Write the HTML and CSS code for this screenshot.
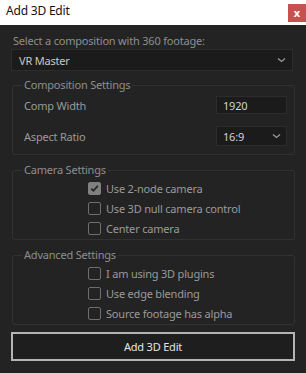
FILE: index.html
```html
<!DOCTYPE html>
<html lang="en">
<head>
    <meta charset="UTF-8">
    <title>Add 3D Edit</title>
    <link rel="stylesheet" href="styles.css">
</head>
<body>
    <div class="titlebar">
        <span class="title">Add 3D Edit</span>
        <button class="close">x</button>
    </div>
    <main class="dialog">
        <p class="prompt">Select a composition with 360 footage:</p>
        <div class="select wide">
            <span>VR Master</span>
            <svg class="chevron" width="9" height="6" viewBox="0 0 9 6"><path d="M1 1.5 L4.5 4.5 L8 1.5" fill="none" stroke="#9a9a9a" stroke-width="1.3"/></svg>
        </div>

        <fieldset class="group">
            <legend>Composition Settings</legend>
            <div class="field first">
                <span>Comp Width</span>
                <div class="input">1920</div>
            </div>
            <div class="field">
                <span>Aspect Ratio</span>
                <div class="select small">
                    <span>16:9</span>
                    <svg class="chevron" width="9" height="6" viewBox="0 0 9 6"><path d="M1 1.5 L4.5 4.5 L8 1.5" fill="none" stroke="#9a9a9a" stroke-width="1.3"/></svg>
                </div>
            </div>
        </fieldset>

        <fieldset class="group checks">
            <legend>Camera Settings</legend>
            <label class="check"><span class="box on"><svg width="11" height="11" viewBox="0 0 11 11"><path d="M2.2 5.6 L4.4 7.8 L8.8 2.8" fill="none" stroke="#262626" stroke-width="1.8"/></svg></span>Use 2-node camera</label>
            <label class="check"><span class="box"></span>Use 3D null camera control</label>
            <label class="check"><span class="box"></span>Center camera</label>
        </fieldset>

        <fieldset class="group checks">
            <legend>Advanced Settings</legend>
            <label class="check"><span class="box"></span>I am using 3D plugins</label>
            <label class="check"><span class="box"></span>Use edge blending</label>
            <label class="check"><span class="box"></span>Source footage has alpha</label>
        </fieldset>

        <button class="primary">Add 3D Edit</button>
    </main>
</body>
</html>
```

FILE: styles.css
```css
* {
    margin: 0;
    padding: 0;
    box-sizing: border-box;
}

body {
    font-family: 'Noto Sans', 'Open Sans', sans-serif;
    font-size: 11px;
    letter-spacing: -0.2px;
    background: #232323;
    color: #8e8e8e;
    height: 373px;
    overflow: hidden;
}

.titlebar {
    background: #fff;
    height: 25px;
    display: flex;
    justify-content: space-between;
    align-items: flex-start;
}

.title {
    color: #111;
    font-size: 12px;
    line-height: 22px;
    padding-left: 6px;
}

.close {
    margin-top: 4px;
    width: 18px;
    height: 18px;
    border: none;
    background: #c75050;
    color: #fff;
    font-family: 'Noto Sans', sans-serif;
    font-size: 11px;
    font-weight: bold;
    line-height: 16px;
}

.dialog {
    padding: 8px 11px 0 11px;
}

.prompt {
    padding-left: 2px;
    line-height: 16px;
}

.select, .input {
    background: #1b1b1b;
    border: 1px solid #2c2c2c;
    color: #c8c8c8;
    display: flex;
    align-items: center;
    justify-content: space-between;
}

.select.wide {
    height: 22px;
    margin: 0 2px 6px 0;
    padding: 0 6px 0 7px;
}

.chevron {
    display: block;
}

.group {
    border: 1px solid #323232;
    border-radius: 3px;
    margin: 0 0 7px 1px;
    padding: 3px 7px 8px 11px;
}

.group legend {
    padding: 0 2px;
    margin-left: -2px;
    line-height: 16px;
    color: #8e8e8e;
}

.field {
    display: flex;
    justify-content: space-between;
    align-items: center;
    margin-top: 12px;
    color: #9a9a9a;
}

.field.first {
    margin-top: 0;
}

.input {
    width: 71px;
    height: 18px;
    padding-left: 6px;
    color: #d2d2d2;
}

.select.small {
    width: 71px;
    height: 20px;
    padding: 0 5px 0 6px;
    color: #d2d2d2;
}

.checks {
    padding: 0 7px 1px 11px;
}

.check {
    display: flex;
    align-items: center;
    height: 20px;
    margin-left: 64px;
    color: #9a9a9a;
}

.box {
    width: 13px;
    height: 13px;
    border: 1.5px solid #6e6e6e;
    border-radius: 2px;
    margin-right: 5px;
    display: flex;
    align-items: center;
    justify-content: center;
}

.box.on {
    background: #808080;
    border-color: #808080;
}

.primary {
    display: block;
    width: 284px;
    height: 29px;
    background: #1e1e1e;
    border: 2px solid #b4b4b4;
    color: #e4e4e4;
    font-family: 'Noto Sans', sans-serif;
    font-size: 11px;
    letter-spacing: -0.2px;
}
```
